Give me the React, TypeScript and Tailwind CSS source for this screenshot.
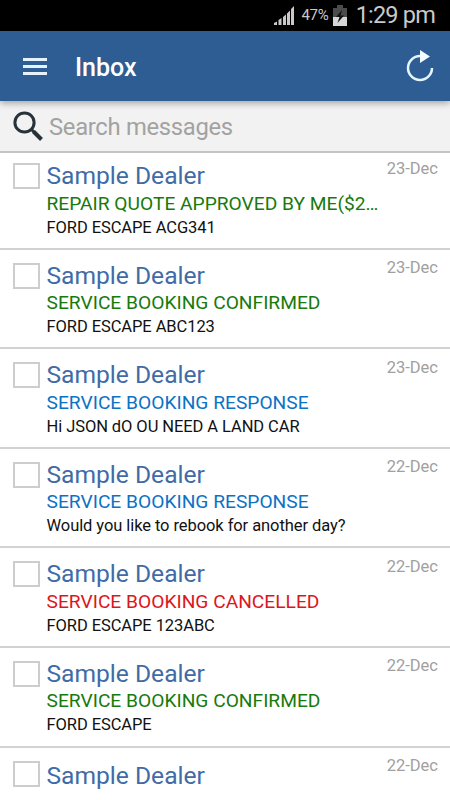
const messages = [
  { sender: "Sample Dealer", subject: "REPAIR QUOTE APPROVED BY ME($2…", body: "FORD ESCAPE ACG341", date: "23-Dec", color: "text-[#177a0c]" },
  { sender: "Sample Dealer", subject: "SERVICE BOOKING CONFIRMED", body: "FORD ESCAPE ABC123", date: "23-Dec", color: "text-[#177a0c]" },
  { sender: "Sample Dealer", subject: "SERVICE BOOKING RESPONSE", body: "Hi JSON dO OU NEED A LAND CAR", date: "23-Dec", color: "text-[#0c72c4]" },
  { sender: "Sample Dealer", subject: "SERVICE BOOKING RESPONSE", body: "Would you like to rebook for another day?", date: "22-Dec", color: "text-[#0c72c4]" },
  { sender: "Sample Dealer", subject: "SERVICE BOOKING CANCELLED", body: "FORD ESCAPE 123ABC", date: "22-Dec", color: "text-[#dc1620]" },
  { sender: "Sample Dealer", subject: "SERVICE BOOKING CONFIRMED", body: "FORD ESCAPE", date: "22-Dec", color: "text-[#177a0c]" },
  { sender: "Sample Dealer", subject: "", body: "", date: "22-Dec", color: "" },
];

function StatusBar() {
  return (
    <div className="flex h-[31px] shrink-0 items-center justify-end bg-black pr-[15px] text-[#c9c9c9]">
      <svg width="20" height="21" viewBox="0 0 20 21" fill="currentColor">
        <path d="M0 18l3-1.5V20H0zM4.500 15l3-2v7h-3zM9 12l3-2.500V20H9zM13 8.500l3-3V20h-3zM17 4l3-3v19h-3z" />
      </svg>
      <span className="ml-[7px] text-[15px] tracking-[-0.2px]">47%</span>
      <svg className="ml-[4px]" width="14" height="21" viewBox="0 0 14 21">
        <path d="M4 0h6v3h4v18H0V3h4z" fill="#4b4b4b" />
        <path d="M0 12h14v9H0z" fill="#d6d6d6" />
        <path d="M9 5L3 12h3.500L4.500 18 11 10.500H7.500z" fill="#111" />
      </svg>
      <span className="ml-[9px] text-[23.500px] tracking-[-0.8px]">1:29 pm</span>
    </div>
  );
}

function Header() {
  return (
    <header className="relative z-10 flex h-[70px] shrink-0 items-center bg-[#2d5d92] pr-4 pl-[23px] text-white shadow-[0_2px_7px_rgba(0,0,0,0.35)]">
      <div className="flex w-6 flex-col gap-[4px]">
        <span className="h-[3px] bg-[#e6f2fb]" />
        <span className="h-[3px] bg-[#e6f2fb]" />
        <span className="h-[3px] bg-[#e6f2fb]" />
      </div>
      <h1 className="mt-[2px] ml-[28px] text-[25px] leading-none font-medium">Inbox</h1>
      <svg className="ml-auto" width="28" height="32" viewBox="0 0 28 32" fill="none">
        <path d="M14 6A12 12 0 1 0 26 18" stroke="#e4f5ff" strokeWidth="2.500" />
        <path d="M14 0l10 6.500L14 13z" fill="#f2fbff" />
      </svg>
    </header>
  );
}

function SearchBar() {
  return (
    <div className="flex h-[52px] shrink-0 items-center border-b-2 border-[#c4c4c4] bg-[#f2f2f2] pt-px pl-[13px]">
      <svg width="31" height="31" viewBox="0 0 31 31" fill="none" stroke="#28323a">
        <circle cx="11.500" cy="11.500" r="9.600" strokeWidth="3" />
        <path d="M18.500 18.500L21 21" strokeWidth="3" />
        <path d="M20.500 20.500L28.500 28.500" strokeWidth="4" />
      </svg>
      <span className="mt-[2px] ml-[5px] text-[23.800px] tracking-[-0.3px] text-[#a2a2a2]">Search messages</span>
    </div>
  );
}

export default function App() {
  return (
    <div className="flex h-[800px] w-[450px] flex-col overflow-hidden bg-white font-['Roboto',sans-serif]">
      <StatusBar />
      <Header />
      <SearchBar />
      <ul className="flex-1 overflow-hidden">
        {messages.map((message, index) => (
          <li
            key={index}
            className="flex h-[99.600px] items-start border-b-2 border-[#d2d2d2] pt-[13px] pr-3 pl-[12.500px] first:h-[96.600px] first:pt-[10px]"
          >
            <div className="h-[26px] w-[27.500px] shrink-0 border-2 border-[#cdcdcd] bg-white" />
            <div className="ml-[6.500px] min-w-0 flex-1 whitespace-nowrap">
              <h2 className={`h-[26px] text-[24.600px] leading-[26px] text-[#416ba6] ${message.subject ? "" : "mt-[2px]"}`}>
                {message.sender}
              </h2>
              <p className={`mt-[1.500px] text-[19.200px] leading-[26px] ${message.color}`}>{message.subject}</p>
              <p className="text-[16.500px] leading-[22px] tracking-[-0.08px] text-[#111]">{message.body}</p>
            </div>
            <span className="-mt-[4.500px] text-[16.500px] leading-[20px] text-[#a0a0a0]">{message.date}</span>
          </li>
        ))}
      </ul>
    </div>
  );
}
